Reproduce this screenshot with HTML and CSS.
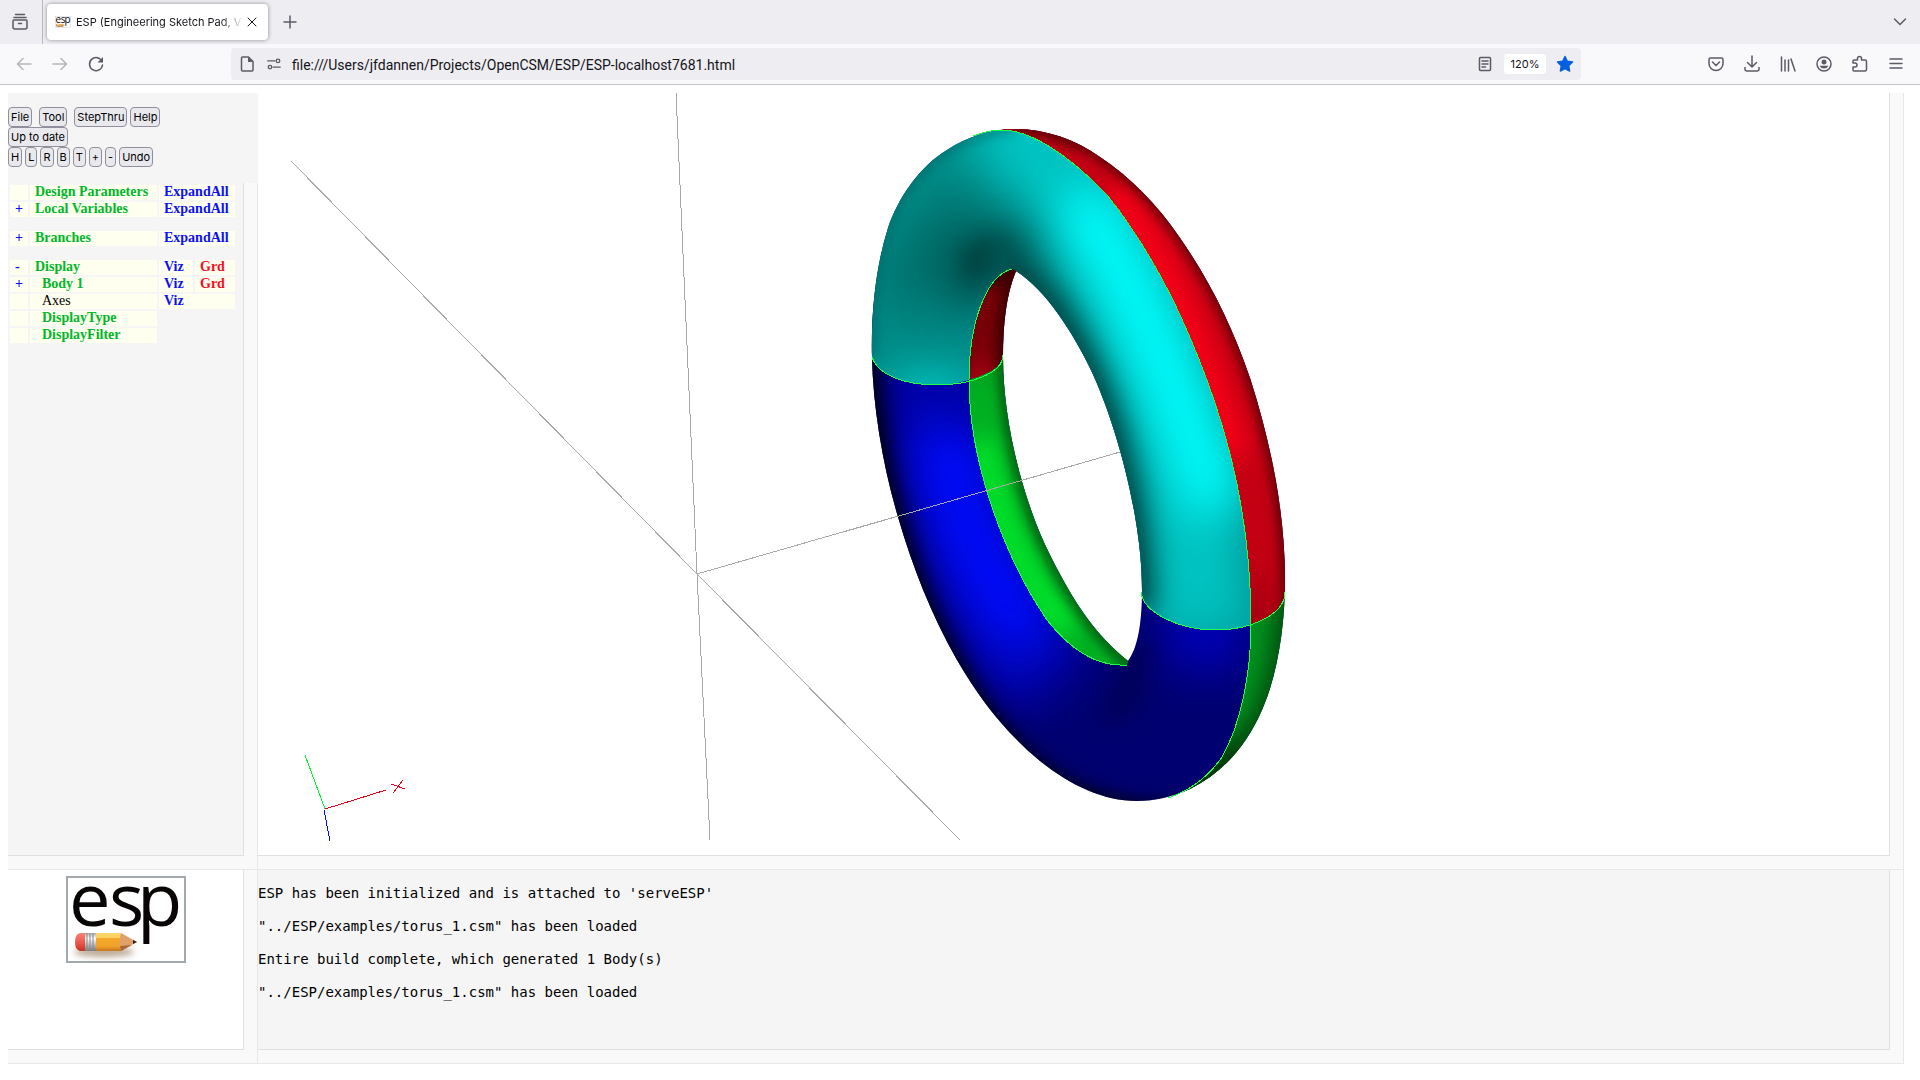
FILE: index.html
```html
<!DOCTYPE html>
<html lang="en">
<head>
<meta charset="utf-8">
<title>ESP (Engineering Sketch Pad, V1.26)</title>
<link rel="stylesheet" href="styles.css">
</head>
<body>
<header class="browser">
  <div class="tabstrip">
    <button class="tool-btn view-btn" aria-label="View recent browsing"><svg class="icon" viewBox="0 0 18 18"><path d="M4.500 1.500h9M3 4.500h12M3 7h12q1 0 1 1v6q0 2-2 2H4q-2 0-2-2V8q0-1 1-1zM7.500 10.500h3"/></svg></button>
    <div class="tab">
      <svg class="favicon" viewBox="0 0 120 87"><use href="#esp-logo"/></svg>
      <span class="tab-title">ESP (Engineering Sketch Pad, V1</span>
      <button class="tab-close" aria-label="Close tab"><svg class="icon-close" viewBox="0 0 10 10"><path d="M1 1l8 8M9 1l-8 8"/></svg></button>
    </div>
    <button class="tool-btn new-tab" aria-label="New tab"><svg class="icon thin" viewBox="0 0 18 18"><path d="M9 3v12M3 9h12"/></svg></button>
    <button class="tool-btn all-tabs" aria-label="List all tabs"><svg class="icon" viewBox="0 0 18 18"><path d="M3.500 6l5.500 5.500L14.500 6"/></svg></button>
  </div>
  <div class="navbar">
    <button class="tool-btn" disabled aria-label="Back"><svg class="icon" viewBox="0 0 18 18"><path d="M16 9H2.500M8 3.500L2.500 9 8 14.500"/></svg></button>
    <button class="tool-btn" disabled aria-label="Forward"><svg class="icon" viewBox="0 0 18 18"><path d="M2 9h13.500M10 3.500L15.500 9 10 14.500"/></svg></button>
    <button class="tool-btn" aria-label="Reload"><svg class="icon" viewBox="0 0 18 18"><path d="M15 6.500A6.500 6.500 0 1 0 15.500 10"/><path class="solid" d="M16 2v5.500h-5.500z"/></svg></button>
    <div class="urlbar">
      <svg class="icon" viewBox="0 0 18 18"><path d="M4.500 2h6l4.500 4.500V15q0 1-1 1H4.500q-1 0-1-1V3q0-1 1-1z"/><path class="solid" d="M10 2l5 5h-5z"/></svg>
      <svg class="icon perms" viewBox="0 0 18 18"><path d="M2 5.500h8M8 12.500h8"/><circle cx="13.500" cy="5.500" r="2"/><circle cx="4.500" cy="12.500" r="2"/></svg>
      <input class="url" type="text" aria-label="Address" value="file:///Users/jfdannen/Projects/OpenCSM/ESP/ESP-localhost7681.html">
      <svg class="icon" viewBox="0 0 18 18"><path d="M4.500 2.500h9q1 0 1 1v11q0 1-1 1h-9q-1 0-1-1v-11q0-1 1-1zM6 6h6M6 9h6M6 12h3.500"/></svg>
      <button class="zoom-level">120%</button>
      <svg class="icon star" viewBox="0 0 18 18"><path d="M9 1.500l2.300 4.800 5.200.7-3.800 3.600.9 5.400L9 13.500 4.400 16l.9-5.400L1.500 7l5.200-.7z"/></svg>
    </div>
    <button class="tool-btn" aria-label="Save to Pocket"><svg class="icon" viewBox="0 0 18 18"><path d="M3.500 3h11q1.500 0 1.500 1.500V8.500a7 7 0 0 1-14 0V4.500Q2 3 3.500 3zM5.500 7l3.500 3.500L12.500 7"/></svg></button>
    <button class="tool-btn" aria-label="Downloads"><svg class="icon" viewBox="0 0 18 18"><path d="M9 1v11M4.500 7.500L9 12l4.500-4.500M2 12.500v1.500q0 2 2 2h10q2 0 2-2v-1.500"/></svg></button>
    <button class="tool-btn" aria-label="Library"><svg class="icon" viewBox="0 0 18 18"><path d="M2.500 2v14M6 5v11M9.500 5v11M12 4l4 12"/></svg></button>
    <button class="tool-btn" aria-label="Account"><svg class="icon" viewBox="0 0 18 18"><circle cx="9" cy="9" r="7"/><circle class="solid" cx="9" cy="7" r="2.500"/><path class="solid" d="M4.500 10.800h9a5 5 0 0 1-9 0z"/></svg></button>
    <button class="tool-btn" aria-label="Extensions"><svg class="icon" viewBox="0 0 18 18"><path d="M3 16q-1 0-1-1v-3h2q2 0 2-2t-2-2H2V6q0-1 1-1h3.500V3.500q0-2 2-2t2 2V5H14q1.500 0 1.500 1.500V14q0 2-1.500 2z"/></svg></button>
    <button class="tool-btn" aria-label="Menu"><svg class="icon" viewBox="0 0 18 18"><path d="M3 4h12M3 8.500h12M3 13h12"/></svg></button>
  </div>
</header>

<main class="esp">
  <aside class="side">
    <div class="controls">
      <div class="control-row">
        <button class="cmd wide-gap">File</button><button class="cmd wide-gap">Tool</button><button class="cmd">StepThru</button><button class="cmd">Help</button>
      </div>
      <div class="control-row"><button class="cmd">Up to date</button></div>
      <div class="control-row">
        <button class="cmd">H</button><button class="cmd">L</button><button class="cmd">R</button><button class="cmd">B</button><button class="cmd">T</button><button class="cmd">+</button><button class="cmd">-</button><button class="cmd">Undo</button>
      </div>
    </div>
    <div class="frame grow">
      <div class="pane tree-pane">
        <table class="tree">
          <colgroup><col class="c-toggle"><col class="c-name"><col class="c-viz"><col class="c-grd"></colgroup>
          <tr><td></td><td><a class="name" href="#">Design Parameters</a></td><td colspan="2"><a href="#">ExpandAll</a></td></tr>
          <tr><td><a href="#">+</a></td><td><a class="name" href="#">Local Variables</a></td><td colspan="2"><a href="#">ExpandAll</a></td></tr>
          <tr class="gap-row"><td colspan="4"></td></tr>
          <tr><td><a href="#">+</a></td><td><a class="name" href="#">Branches</a></td><td colspan="2"><a href="#">ExpandAll</a></td></tr>
          <tr class="gap-row"><td colspan="4"></td></tr>
          <tr><td><a href="#">-</a></td><td><a class="name" href="#">Display</a></td><td><a href="#">Viz</a></td><td><a class="grd" href="#">Grd</a></td></tr>
          <tr><td><a href="#">+</a></td><td class="child"><a class="name" href="#">Body 1</a></td><td><a href="#">Viz</a></td><td><a class="grd" href="#">Grd</a></td></tr>
          <tr><td></td><td class="child">Axes</td><td colspan="2"><a href="#">Viz</a></td></tr>
          <tr><td></td><td class="child"><a class="name" href="#">DisplayType</a></td></tr>
          <tr><td></td><td class="child"><a class="name" href="#">DisplayFilter</a></td></tr>
        </table>
      </div>
    </div>
  </aside>

  <section class="frame">
    <div class="pane view-pane">
      <svg class="scene" viewBox="258 93 1631 762" role="img" aria-label="Torus">
        <defs>
          <filter id="b6" filterUnits="userSpaceOnUse" x="700" y="0" width="760" height="940" color-interpolation-filters="sRGB"><feGaussianBlur stdDeviation="6"/></filter>
          <filter id="b12" filterUnits="userSpaceOnUse" x="700" y="0" width="760" height="940" color-interpolation-filters="sRGB"><feGaussianBlur stdDeviation="12"/></filter>
          <filter id="b24" filterUnits="userSpaceOnUse" x="700" y="0" width="760" height="940" color-interpolation-filters="sRGB"><feGaussianBlur stdDeviation="24"/></filter>
          <clipPath id="torus"><path clip-rule="evenodd" d="M872 357C871 310 876 266 888 228C898 198 920 166 947 150C967 137 990 129 1014 129C1045 129 1075 139 1100 157C1130 177 1157 204 1180 238C1210 281 1233 328 1250 378C1270 440 1285 510 1285 580C1285 628 1277 676 1262 710C1246 747 1222 773 1190 789C1172 797 1155 801 1137 801C1103 801 1070 785 1040 761C1008 735 980 700 957 660C931 614 913 568 898 517C883 466 873 408 872 357ZM1016 271C1046 290 1073 333 1090 368C1115 420 1142 515 1142 590C1142 622 1138 648 1128 661C1096 635 1075 605 1050 555C1022 499 1003 420 1003 357C1003 325 1006 295 1016 271Z"/></clipPath>
          <clipPath id="face-cyan"><path d="M860 357L872 357C878 376 907 385 937 385C948 385 959 383 969 380C969 325 985 276 1012 269L1016 271L1080 450L1141 592C1143 612 1178 630 1216 630C1228 630 1240 628 1251 624C1251 568 1244 510 1231 458C1217 402 1196 348 1173 300C1154 262 1132 226 1107 195C1068 154 1030 130 1002 130C992 130 983 132 973 136L973 100L850 100Z"/></clipPath>
          <clipPath id="face-red"><path d="M1002 130C1030 130 1068 154 1107 195C1132 226 1154 262 1173 300C1196 348 1217 402 1231 458C1244 510 1251 568 1251 624C1267 619 1285 608 1285 592L1310 592L1310 100L1002 100Z"/></clipPath>
          <clipPath id="face-red-in"><path d="M1012 269C985 276 969 325 969 380C985 375 1003 368 1003 355L1060 355L1016 271Z"/></clipPath>
          <clipPath id="face-green"><path d="M1251 624C1251 675 1240 726 1222 757C1208 777 1189 791 1168 798L1168 820L1310 820L1310 592L1285 592C1285 608 1267 619 1251 624Z"/></clipPath>
          <clipPath id="face-green-in"><path d="M969 380C969 460 1003 555 1047 620C1073 653 1099 667 1127 665L1128 661L1090 560L1040 355L1003 355C1003 368 985 375 969 380Z"/></clipPath>
        </defs>
        <g class="guide">
          <path d="M676 93L697 574L710 840M291 161L697 574L960 840M697 574L1120 452"/>
        </g>
        <g clip-path="url(#torus)">
          <g class="shade">
            <rect class="flat" x="860" y="120" width="440" height="700" fill="#000070"/>
            <path d="M930 320C930 420 955 560 1050 690" stroke="#0004b4" stroke-width="100" filter="url(#b24)"/>
            <path d="M945 430C955 500 975 565 1035 640" stroke="#000cff" stroke-width="60" filter="url(#b24)"/>
            <path d="M900 365L970 365" stroke="#0000a0" stroke-width="50" filter="url(#b24)"/>
            <path d="M1210 580L1200 670" stroke="#0000b8" stroke-width="80" filter="url(#b24)"/>
            <path d="M1105 710Q1128 720 1140 640" stroke="#000050" stroke-width="20" filter="url(#b12)"/>
            <path d="M1250 806C1160 846 1070 816 1020 765C950 700 905 590 888 517C873 466 863 408 862 300" stroke="#000010" stroke-width="30" filter="url(#b12)"/>
            <path d="M1210 797C1140 817 1070 792 1028 755C958 690 913 580 896 517C881 466 871 408 870 340" stroke="#000010" stroke-width="4" filter="url(#b6)"/>
          </g>
          <g class="shade" clip-path="url(#face-green)">
            <rect class="flat" x="1150" y="580" width="160" height="240" fill="#00901e"/>
            <path d="M1290 580C1290 640 1282 676 1267 714C1240 760 1200 790 1160 800" stroke="#003008" stroke-width="20" filter="url(#b12)"/>
            <path d="M1240 755L1180 800" stroke="#003808" stroke-width="36" filter="url(#b12)"/>
          </g>
          <g class="shade" clip-path="url(#face-red)">
            <rect class="flat" x="1000" y="100" width="310" height="530" fill="#c40014"/>
            <path d="M1110 190C1160 250 1200 340 1235 458" stroke="#fa0018" stroke-width="30" filter="url(#b12)"/>
            <path d="M1255 590L1255 660" stroke="#980010" stroke-width="50" filter="url(#b24)"/>
            <path d="M990 120Q1040 125 1080 144" stroke="#980010" stroke-width="14" filter="url(#b6)"/>
            <path d="M1014 125C1045 127 1077 137 1102 155C1132 175 1159 202 1182 236C1212 279 1235 326 1252 376C1272 438 1289 510 1289 620" stroke="#500004" stroke-width="12" filter="url(#b6)"/>
          </g>
          <g class="shade" clip-path="url(#face-cyan)">
            <rect class="flat" x="850" y="100" width="420" height="550" fill="#008c88"/>
            <path d="M990 110C1080 170 1125 270 1150 350C1175 410 1200 500 1205 700" stroke="#00c4c2" stroke-width="100" filter="url(#b24)"/>
            <path d="M1075 195C1135 280 1175 380 1218 510" stroke="#00ffff" stroke-width="56" filter="url(#b24)"/>
            <path d="M1170 655L1260 655" stroke="#009c9a" stroke-width="50" filter="url(#b24)"/>
            <path d="M910 310C910 260 930 230 975 215" stroke="#006c68" stroke-width="50" filter="url(#b24)"/>
            <path d="M890 400L970 400" stroke="#00d0cc" stroke-width="50" filter="url(#b24)"/>
            <path d="M975 305Q955 235 1025 255" stroke="#003836" stroke-width="40" filter="url(#b24)"/>
            <path d="M970 272Q972 250 1000 254" stroke="#003432" stroke-width="16" filter="url(#b12)"/>
            <path d="M985 250C1040 265 1073 333 1090 368C1115 420 1142 515 1142 610" stroke="#005452" stroke-width="24" filter="url(#b12)"/>
            <path d="M1010 264C1046 285 1073 333 1090 368C1115 420 1142 515 1142 600" stroke="#003432" stroke-width="4" filter="url(#b6)"/>
            <path d="M872 357C871 310 876 266 888 228C898 198 920 166 947 150C967 137 990 129 1014 129" stroke="#005452" stroke-width="4" filter="url(#b6)"/>
          </g>
          <g class="shade" clip-path="url(#face-red-in)">
            <rect class="flat" x="960" y="260" width="110" height="130" fill="#780008"/>
            <path d="M965 385L1003 372" stroke="#a80014" stroke-width="30" filter="url(#b12)"/>
            <path d="M1003 370C1003 325 1006 295 1016 265M985 285L1016 265" stroke="#3c0000" stroke-width="14" filter="url(#b6)"/>
          </g>
          <g class="shade" clip-path="url(#face-green-in)">
            <rect class="flat" x="960" y="350" width="180" height="330" fill="#00b022"/>
            <path d="M980 440C1000 530 1030 590 1070 630" stroke="#00ee2e" stroke-width="24" filter="url(#b12)"/>
            <path d="M969 375L1003 365" stroke="#009a1e" stroke-width="20" filter="url(#b12)"/>
            <path d="M1135 670C1096 635 1075 605 1050 555C1022 499 1003 420 1003 350" stroke="#00480e" stroke-width="10" filter="url(#b6)"/>
          </g>
        </g>
        <g class="edge">
          <path d="M973 136C983 132 992 130 1002 130C1030 130 1068 154 1107 195C1132 226 1154 262 1173 300C1196 348 1217 402 1231 458C1244 510 1251 568 1251 624C1251 675 1240 726 1222 757C1208 777 1189 791 1168 798"/>
          <path d="M1012 269C985 276 969 325 969 380C969 460 1003 555 1047 620C1073 653 1099 667 1127 665"/>
          <path d="M872 357C878 376 907 385 937 385C971 385 1003 373 1003 355M1141 592C1143 612 1178 630 1216 630C1250 630 1285 615 1285 592"/>
        </g>
        <path class="guide" d="M840 533L1120 452"/>
        <g class="triad">
          <path stroke="#00f52c" d="M305 755L325 809"/>
          <path stroke="#f00018" d="M325 809L386 790M391 784L405 789M403 780L393 793"/>
          <path stroke="#000cff" d="M324 810L330 841"/>
        </g>
      </svg>
    </div>
  </section>

  <section class="frame">
    <div class="pane logo-pane">
      <svg class="logo" viewBox="0 0 120 87" role="img" aria-label="ESP logo">
        <defs>
          <linearGradient id="wood" x1="0" y1="0" x2="0" y2="1"><stop offset="0" stop-color="#ffd96a"/><stop offset=".28" stop-color="#fcd060"/><stop offset=".3" stop-color="#f5a92c"/><stop offset=".75" stop-color="#f0a028"/><stop offset="1" stop-color="#c4761c"/></linearGradient>
          <linearGradient id="metal" x1="0" y1="0" x2="0" y2="1"><stop offset="0" stop-color="#aaa"/><stop offset=".3" stop-color="#fff"/><stop offset="1" stop-color="#777"/></linearGradient>
          <linearGradient id="rubber" x1="0" y1="0" x2="0" y2="1"><stop offset="0" stop-color="#f98476"/><stop offset=".5" stop-color="#ee5a4e"/><stop offset="1" stop-color="#c83228"/></linearGradient>
          <filter id="soft" x="-20%" y="-100%" width="140%" height="300%"><feGaussianBlur stdDeviation="3"/></filter>
          <g id="esp-logo">
            <rect x="1" y="1" width="118" height="85" fill="#fff" stroke="#a3a9ad" stroke-width="2"/>
            <text class="logo-text" x="3 43 71" y="50">esp</text>
            <ellipse cx="38" cy="76" rx="30" ry="5" fill="#8a6a48" opacity=".6" filter="url(#soft)"/>
            <path d="M19 57H14Q9 58 9 66T14 75H19Z" fill="url(#rubber)"/>
            <rect x="19" y="57" width="11" height="18" fill="url(#metal)"/>
            <path d="M21 57V75M24 57V75M27 57V75" stroke="#888" stroke-width="1"/>
            <path d="M30 57H55L58 61L55 70L58 73L55 75H30Z" fill="url(#wood)"/>
            <path d="M55 57L71 66L55 75Q52 66 55 57Z" fill="#e0a06a"/>
            <path d="M54 70L66 69L55 75Z" fill="#a8683a"/>
            <path d="M67 64L71 66L67 68Z" fill="#222"/>
          </g>
        </defs>
        <use href="#esp-logo"/>
      </svg>
    </div>
  </section>

  <section class="frame">
    <div class="pane message-pane">
      <p>ESP has been initialized and is attached to 'serveESP'</p>
      <p>"../ESP/examples/torus_1.csm" has been loaded</p>
      <p>Entire build complete, which generated 1 Body(s)</p>
      <p>"../ESP/examples/torus_1.csm" has been loaded</p>
    </div>
  </section>
</main>
</body>
</html>
```
FILE: styles.css
```css
* { box-sizing: border-box; }

body {
  margin: 0;
  background: #fff;
  color: #000;
  font-family: "Liberation Serif", serif;
  font-size: 14px;
}

button { font-family: Inter, sans-serif; margin: 0; }

/* browser chrome */
.browser {
  border-bottom: 1px solid #c4c4c8;
  font-family: Inter, sans-serif;
  color: #15141a;
}

.tabstrip {
  display: flex;
  align-items: center;
  height: 44px;
  background: #eeedf2;
}

.tool-btn {
  display: flex;
  align-items: center;
  justify-content: center;
  flex: none;
  width: 36px;
  height: 32px;
  padding: 0;
  border: 0;
  background: none;
  color: #5b5b66;
}
.tool-btn:disabled { color: #b4b4ba; }

.icon {
  flex: none;
  width: 18px;
  height: 18px;
  fill: none;
  stroke: currentColor;
  stroke-width: 1.5;
  stroke-linecap: round;
  stroke-linejoin: round;
}
.icon .solid { fill: currentColor; stroke-width: 0; }
.icon.perms { width: 16px; height: 16px; }

.view-btn {
  width: 43px;
  height: 44px;
  padding-right: 2px;
  border-right: 1px solid #b8b8be;
}

.tab {
  display: flex;
  align-items: center;
  width: 221px;
  height: 36px;
  margin-left: 4px;
  padding: 0 8px;
  border-radius: 4px;
  background: #fff;
  box-shadow: 0 0 4px rgba(0, 0, 0, .4);
}
.favicon { flex: none; width: 16px; height: 16px; }
.tab-title {
  flex: 1;
  min-width: 0;
  margin-left: 5px;
  white-space: nowrap;
  font-size: 11px;
  line-height: 20px;
  -webkit-mask-image: linear-gradient(to left, transparent, #000 24px);
  mask-image: linear-gradient(to left, transparent, #000 24px);
}
.tab-close { flex: none; display: flex; padding: 3px; border: 0; background: none; }
.icon-close { width: 10px; height: 10px; fill: none; stroke: #15141a; stroke-width: 1; stroke-linecap: round; }
.new-tab { margin-left: 4px; }
.all-tabs { margin-left: auto; margin-right: 2px; }

.navbar {
  display: flex;
  align-items: center;
  height: 40px;
  padding: 0 6px;
  background: #f9f9fb;
}

.urlbar {
  flex: 1;
  display: flex;
  align-items: center;
  height: 32px;
  margin: 0 117px;
  padding: 0 7px;
  gap: 10px;
  border-radius: 4px;
  background: #eeedf2;
  color: #5b5b66;
}
.url {
  flex: 1;
  min-width: 0;
  padding: 2px 0 0;
  border: 0;
  background: none;
  color: #15141a;
  font: 14px/20px Roboto, sans-serif;
}
.zoom-level {
  width: 42px;
  height: 20px;
  padding: 0;
  border: 0;
  border-radius: 4px;
  background: #fff;
  color: #15141a;
  font-size: 11px;
}
.star { color: #0560df; fill: currentColor; }

/* page */
.esp {
  display: grid;
  grid-template-columns: 250px 1fr;
  padding: 8px 16px 16px 8px;
}

.side { display: flex; flex-direction: column; }

.controls {
  padding: 14px 0 16px;
  background: #f5f5f5;
}
.control-row { display: flex; gap: 3px; }
.cmd {
  height: 20px;
  padding: 0 2px;
  border: 1px solid #8f8f9d;
  border-radius: 4px;
  background: #e9e9ed;
  color: #000;
  font-size: 11px;
  line-height: 18px;
}
.wide-gap { margin-right: 4px; }

.frame {
  display: flex;
  padding: 0 13px 13px 0;
  border: solid #e8e8e8;
  border-width: 0 1px 1px 0;
  background: #f9f9f9;
}
.grow { flex: 1; }

.pane {
  flex: 1;
  min-width: 0;
  border: solid #e0e0e0;
  border-width: 0 1px 1px 0;
}
.tree-pane, .message-pane { background: #f5f5f5; }
.view-pane, .logo-pane { background: #fff; }

.tree {
  table-layout: fixed;
  width: 229px;
  border-spacing: 2px;
  line-height: 13px;
}
.c-toggle { width: 18px; }
.c-name { width: 127px; }
.c-viz { width: 34px; }
.c-grd { width: 40px; }
.tree td { height: 15px; padding: 0 5px; background: #ffffef; white-space: nowrap; vertical-align: top; }
.tree .gap-row td { height: 10px; background: none; }
.tree td.child { padding-left: 12px; }
.tree a { color: #0a10fa; font-weight: bold; text-decoration: none; }
.tree a.name { color: #00b72a; }
.tree a.grd { color: #fa0a1e; }

.scene { display: block; width: 100%; height: auto; }
.guide { fill: none; stroke: #a8a8a8; stroke-width: 1; shape-rendering: crispEdges; }
.triad { fill: none; stroke-width: 1; shape-rendering: crispEdges; }
.edge { fill: none; stroke: #1eff46; stroke-width: 1; shape-rendering: crispEdges; }
.shade { fill: none; stroke-linejoin: round; }
.shade .flat { stroke: none; }

.logo-pane { padding-top: 6px; }
.logo { display: block; width: 120px; height: 87px; margin: 0 auto; }
.logo-text { font: 74px "Open Sans", sans-serif; fill: #0a0505; }

.message-pane {
  padding: 15px 0 32px;
  font: 14px/17px "DejaVu Sans Mono", monospace;
}
.message-pane p { margin: 0 0 16px; }
```
